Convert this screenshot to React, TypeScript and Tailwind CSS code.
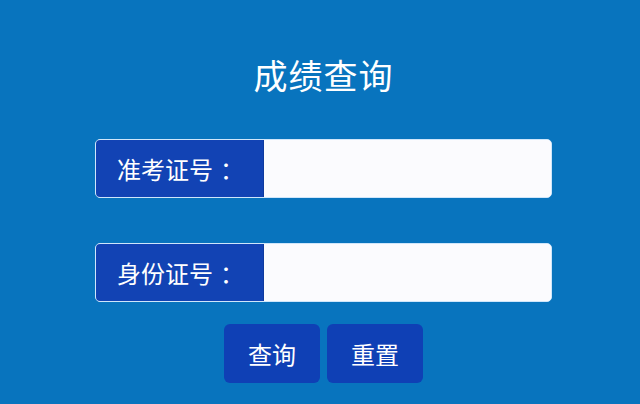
import React from 'react';

const cjk = { fontFamily: '"Noto Sans CJK SC", "Noto Sans", sans-serif' };

// --- 查询表单的一行 ---
const Field = ({ label }: { label: string }) => (
    <div className="flex w-[457px] h-[59px] rounded-[5px] border border-[#cfe6fb] overflow-hidden bg-[#fbfbfe]">
        <div className="w-[168px] h-full bg-[#1243b4] flex items-center pl-[21px] text-white text-[24px] leading-none border-r border-[#0e3a9e]">
            {label}
            <span className="ml-[7px]">：</span>
        </div>
        <input className="flex-1 h-full bg-[#fbfbfe] outline-none px-3" />
    </div>
);

export default function App() {
    return (
        <div style={cjk} className="w-[640px] h-[404px] bg-[#0874be] flex flex-col items-center pl-[7px] overflow-hidden">
            {/* 标题 */}
            <h1 className="mt-[58px] text-[34px] leading-none text-white font-normal tracking-[1px]">成绩查询</h1>

            <div className="mt-[47px] flex flex-col gap-[45px]">
                <Field label="准考证号" />
                <Field label="身份证号" />
            </div>

            {/* 按钮 */}
            <div className="mt-[22px] flex gap-[7px]">
                <button className="w-[96px] h-[59px] rounded-[6px] bg-[#0f40b5] text-white text-[24px] leading-none">查询</button>
                <button className="w-[96px] h-[59px] rounded-[6px] bg-[#0f40b5] text-white text-[24px] leading-none">重置</button>
            </div>
        </div>
    );
}
